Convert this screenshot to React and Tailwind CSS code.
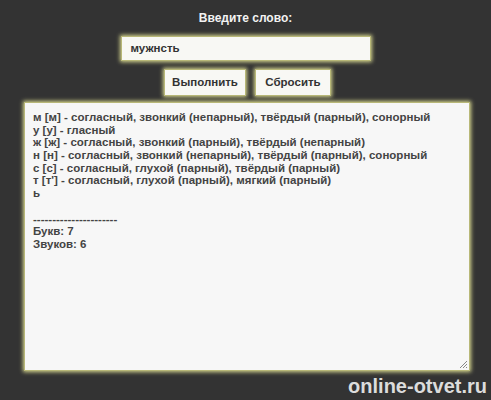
export default function App() {
  const lines = [
    "м [м] - согласный, звонкий (непарный), твёрдый (парный), сонорный",
    "у [у] - гласный",
    "ж [ж] - согласный, звонкий (парный), твёрдый (непарный)",
    "н [н] - согласный, звонкий (непарный), твёрдый (парный), сонорный",
    "с [с] - согласный, глухой (парный), твёрдый (парный)",
    "т [т'] - согласный, глухой (парный), мягкий (парный)",
    "ь",
    "",
    "----------------------",
    "Букв: 7",
    "Звуков: 6",
  ];
  const glow = "border border-[#b8b878] shadow-[0_0_4px_1px_#d8d890]";
  return (
    <div className="w-[491px] h-[400px] bg-[#333333] relative overflow-hidden" style={{ fontFamily: '"Liberation Sans", Arial, sans-serif' }}>
      <div className="flex flex-col items-center pt-[11px]">
        <div className="text-[12px] font-bold text-[#f2f2f2] leading-[14px]">Введите слово:</div>
        <div className={`mt-[11px] w-[250px] h-[25px] bg-[#f8f8f4] ${glow} flex items-center pl-[9px] text-[11.5px] font-bold text-[#333]`}>
          мужнсть
        </div>
        <div className="flex gap-[9px] mt-[8px] ml-[4px]">
          <div className={`w-[82px] h-[27px] bg-[#f8f8f4] ${glow} flex items-center justify-center text-[11.5px] font-bold text-[#333]`}>Выполнить</div>
          <div className={`w-[76px] h-[27px] bg-[#f8f8f4] ${glow} flex items-center justify-center text-[11.5px] font-bold text-[#333]`}>Сбросить</div>
        </div>
      </div>
      <div className={`absolute left-[24px] top-[102px] w-[446px] h-[269px] bg-[#f7f7f7] ${glow} pl-[8px] pt-[8px]`}>
        {lines.map((l, i) => (
          <div key={i} className="text-[11.5px] font-bold text-[#444] leading-[12.7px] h-[12.7px] whitespace-pre">{l}</div>
        ))}
        <svg className="absolute right-[1px] bottom-[1px]" width="10" height="10" viewBox="0 0 10 10">
          <path d="M9 2L2 9M9 5L5 9M9 8L8 9" stroke="#888" strokeWidth="1" />
        </svg>
      </div>
      <div className="absolute right-[4px] bottom-[2px] text-[20px] font-bold text-[#dcdcdc] leading-[23px]">online-otvet.ru</div>
    </div>
  );
}
